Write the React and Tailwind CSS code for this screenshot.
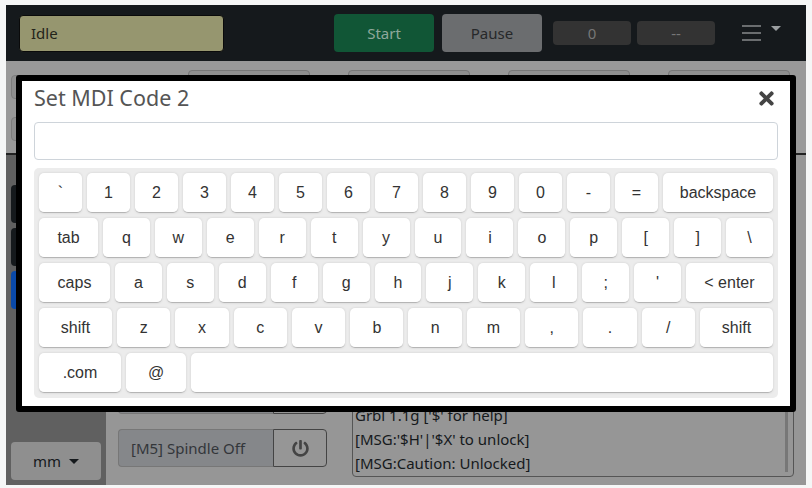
import { FaPowerOff, FaTimes } from "react-icons/fa";

const rows = [
  [["`"], ["1"], ["2"], ["3"], ["4"], ["5"], ["6"], ["7"], ["8"], ["9"], ["0"], ["-"], ["="], ["backspace", "w-[110px]"]],
  [["tab", "w-[59px]"], ["q"], ["w"], ["e"], ["r"], ["t"], ["y"], ["u"], ["i"], ["o"], ["p"], ["["], ["]"], ["\\"]],
  [["caps", "w-[71px]"], ["a"], ["s"], ["d"], ["f"], ["g"], ["h"], ["j"], ["k"], ["l"], [";"], ["'"], ["< enter", "w-[87px]"]],
  [["shift", "w-[73px]"], ["z"], ["x"], ["c"], ["v"], ["b"], ["n"], ["m"], [","], ["."], ["/"], ["shift", "w-[73px]"]],
  [[".com", "w-[82px]"], ["@", "w-[60px]"], ["\u00a0", "flex-1"]],
];

function Key({ label, size }) {
  return (
    <div
      className={
        "h-10 rounded-[5px] bg-white border-b border-[#b5b5b5] shadow-[0_0_3px_-1px_rgba(0,0,0,0.3)] flex items-center justify-center text-[16px] text-[#333] " +
        (size ? size : "flex-1 min-w-0")
      }
    >
      {label}
    </div>
  );
}

function Keyboard() {
  return (
    <div className="mt-2 bg-[#ececec] rounded-[5px] p-[5px] flex flex-col gap-[5px] font-['Liberation_Sans',sans-serif]">
      {rows.map((row, i) => (
        <div key={i} className="flex gap-[5px]">
          {row.map(([label, size], j) => (
            <Key key={j} label={label} size={size} />
          ))}
        </div>
      ))}
    </div>
  );
}

function Modal() {
  return (
    <div className="absolute left-[10px] top-[70px] w-[780px] h-[337px] border-[6px] border-black rounded-[3px] bg-white px-3">
      <div className="flex items-center justify-between h-[35px]">
        <span className="text-[21.5px] text-[#555]">Set MDI Code 2</span>
        <FaTimes className="text-[21px] text-[#444] mr-[1px]" />
      </div>
      <div className="mt-1.5 h-[38px] border border-[#ced4da] rounded bg-white" />
      <Keyboard />
    </div>
  );
}

function Header() {
  return (
    <div className="h-14 bg-[#15191c] flex items-center">
      <div className="ml-[13px] w-[205px] h-[37px] bg-[#96966f] border border-[#0a0a0a] rounded flex items-center pl-[11px] text-[#23241a]">Idle</div>
      <div className="ml-[110px] w-[100px] h-[38px] rounded bg-[#115636] text-[#8fa89b] flex items-center justify-center">Start</div>
      <div className="ml-2 w-[100px] h-[38px] rounded bg-[#6b6d6f] text-[#26282a] flex items-center justify-center">Pause</div>
      <div className="ml-[11px] w-[78px] h-6 rounded bg-[#333] text-[#777] flex items-center justify-center">0</div>
      <div className="ml-[6px] w-[78px] h-6 rounded bg-[#333] text-[#777] flex items-center justify-center">--</div>
      <div className="ml-[27px] w-[19px] flex flex-col gap-[5px]">
        <span className="h-0.5 bg-[#6a6d6f]" />
        <span className="h-0.5 bg-[#6a6d6f]" />
        <span className="h-0.5 bg-[#6a6d6f]" />
      </div>
      <span className="ml-[10px] mb-[10px] border-x-[5px] border-x-transparent border-t-[5px] border-t-[#9a9ea0]" />
    </div>
  );
}

function Toolbar() {
  return (
    <div className="h-[94px] bg-[#999] border-b-2 border-[#222] flex shrink-0">
      <div className="ml-[5px] mt-[14px] flex flex-col gap-[18px]">
        <div className="w-6 h-6 rounded bg-[#8f8f8f] border border-[#7d7d7d]" />
        <div className="w-6 h-6 rounded bg-[#8f8f8f] border border-[#7d7d7d]" />
      </div>
      <div className="ml-[153px] mt-[9px] flex gap-[38px]">
        <div className="w-[122px] h-10 rounded bg-[#8f8f8f] border border-[#777]" />
        <div className="w-[122px] h-10 rounded bg-[#8f8f8f] border border-[#777]" />
        <div className="w-[122px] h-10 rounded bg-[#8f8f8f] border border-[#777]" />
        <div className="w-[122px] h-10 rounded bg-[#8f8f8f] border border-[#777]" />
      </div>
    </div>
  );
}

function Sidebar() {
  return (
    <div className="w-[100px] bg-[#606060] flex flex-col justify-between pl-[5px] pt-[30px] pb-[5px] shrink-0">
      <div className="flex flex-col gap-[5px]">
        <div className="w-[40px] h-[38px] rounded bg-[#15191c]" />
        <div className="w-[40px] h-[38px] rounded bg-[#15191c]" />
        <div className="w-[40px] h-[38px] rounded bg-[#0a49a8]" />
      </div>
      <div className="w-[90px] h-[38px] rounded bg-[#8f8f8f] text-[#15191c] flex items-center justify-center gap-2">
        mm
        <span className="border-x-[5px] border-x-transparent border-t-[5px] border-t-[#15191c]" />
      </div>
    </div>
  );
}

function SpindleRow({ label }) {
  return (
    <div className="flex h-[38px] w-[209px]">
      <div className="flex-1 bg-[#85878a] border border-r-0 border-[#777] rounded-l flex items-center pl-3 text-[#33363a] whitespace-nowrap">{label}</div>
      <div className="w-[54px] border border-[#444] rounded-r flex items-center justify-center">
        <FaPowerOff className="text-[17px] text-[#444]" />
      </div>
    </div>
  );
}

function Console() {
  return (
    <div className="relative ml-[25px] mb-2 w-[442px] h-[200px] border border-[#555] rounded flex flex-col justify-end pl-[2px] pb-[1px] text-[#15191c] leading-6">
      <div>Grbl 1.1g ['$' for help]</div>
      <div>[MSG:'$H'|'$X' to unlock]</div>
      <div>[MSG:Caution: Unlocked]</div>
      <div className="absolute right-[5px] top-0 bottom-1 w-[3px] bg-[#777]" />
    </div>
  );
}

export default function App() {
  return (
    <div className="w-[812px] h-[488px] bg-[#f5f6f6] pt-[5px] pl-[6px] overflow-hidden font-['Noto_Sans',sans-serif] text-[15px]">
      <div className="relative w-[800px] h-[480px] flex flex-col bg-[#969696]">
        <Header />
        <Toolbar />
        <div className="flex-1 flex min-h-0">
          <Sidebar />
          <div className="flex-1 flex items-end pl-3">
            <div className="flex flex-col gap-[15px] mb-[18px]">
              <SpindleRow label="[M3] Spindle On" />
              <SpindleRow label="[M5] Spindle Off" />
            </div>
            <Console />
          </div>
        </div>
        <Modal />
      </div>
    </div>
  );
}
